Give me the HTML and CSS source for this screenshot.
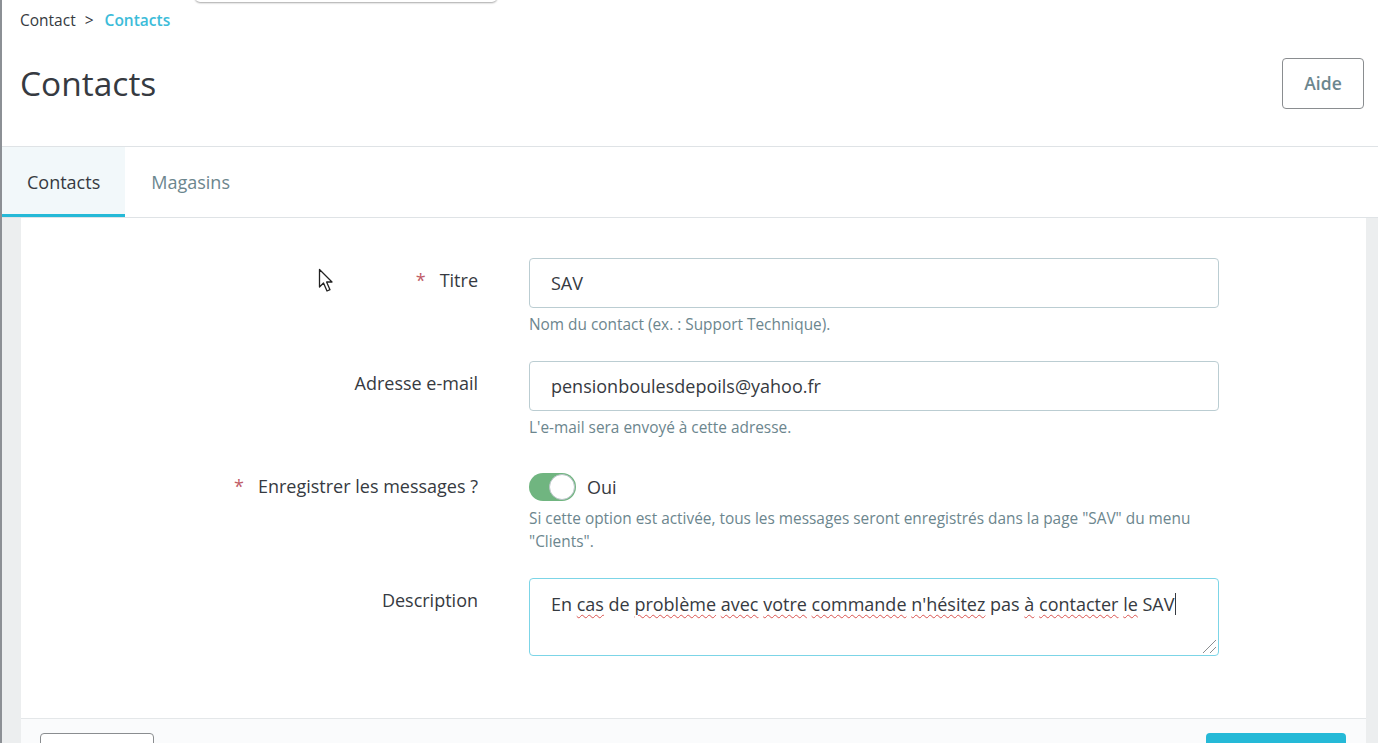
FILE: index.html
```html
<!DOCTYPE html>
<html lang="fr">
<head>
    <meta charset="UTF-8">
    <title>Contacts</title>
    <link rel="stylesheet" href="styles.css">
</head>
<body>
  <div class="page">
    <div class="menu-edge"></div>

    <div class="header">
      <div class="breadcrumb">
        <span>Contact</span>
        <span class="sep">&gt;</span>
        <span class="current">Contacts</span>
      </div>
      <div class="title-row">
        <h1>Contacts</h1>
        <button class="btn-help">Aide</button>
      </div>
    </div>

    <div class="tabs">
      <div class="tab active">Contacts</div>
      <div class="tab">Magasins</div>
    </div>

    <div class="content">
      <div class="card">
        <div class="card-body">
          <div class="form-row">
            <label class="label"><span class="req">*</span>Titre</label>
            <div class="field">
              <div class="input">SAV</div>
              <p class="help">Nom du contact (ex. : Support Technique).</p>
            </div>
          </div>

          <div class="form-row">
            <label class="label">Adresse e-mail</label>
            <div class="field">
              <div class="input">pensionboulesdepoils@yahoo.fr</div>
              <p class="help">L'e-mail sera envoyé à cette adresse.</p>
            </div>
          </div>

          <div class="form-row switch-row">
            <label class="label"><span class="req">*</span>Enregistrer les messages ?</label>
            <div class="field">
              <div class="switch-line">
                <span class="switch"><span class="knob"></span></span>
                <span class="switch-text">Oui</span>
              </div>
              <p class="help">Si cette option est activée, tous les messages seront enregistrés dans la page "SAV" du menu<br>"Clients".</p>
            </div>
          </div>

          <div class="form-row">
            <label class="label">Description</label>
            <div class="field">
              <div class="textarea">En <span class="typo">cas</span> de <span class="typo">problème</span> <span class="typo">avec</span> <span class="typo">votre</span> <span class="typo">commande</span> <span class="typo">n'hésitez</span> pas <span class="typo">à</span> <span class="typo">contacter</span> <span class="typo">le</span> SAV<span class="caret"></span><span class="grip"></span></div>
            </div>
          </div>
        </div>

        <div class="card-footer">
          <button class="btn-outline"></button>
          <button class="btn-primary"></button>
        </div>
      </div>
    </div>

    <svg class="pointer" width="18" height="26" viewBox="0 0 18 26">
      <path d="M1.5 1.5 L1.5 19 L5.5 15 L9 23 L12 21.7 L8.6 14 L14 14 Z" fill="#fff" stroke="#222" stroke-width="1.3" stroke-linejoin="round"/>
    </svg>
  </div>
</body>
</html>
```

FILE: styles.css
```css
* {
    box-sizing: border-box;
}

body {
    margin: 0;
    font-family: "Open Sans", "Noto Sans", sans-serif;
    color: #363a41;
    background: #fff;
}

.page {
    position: relative;
    width: 1378px;
    height: 743px;
    border-left: 2px solid #8c9095;
    overflow: hidden;
}

/* right scroll edge */
.page::after {
    content: "";
    position: absolute;
    left: 1376px;
    top: 40px;
    bottom: 0;
    width: 2px;
    background: #8c9095;
}

.menu-edge {
    position: absolute;
    left: 193px;
    top: -6px;
    width: 302px;
    height: 8px;
    border-radius: 0 0 5px 5px;
    background: #fff;
    box-shadow: 0 1px 2px rgba(0, 0, 0, 0.35);
}

.header {
    height: 147px;
    padding: 0 12px 0 18px;
    border-bottom: 1px solid #dfe3e6;
}

.breadcrumb {
    height: 40px;
    display: flex;
    align-items: center;
    gap: 9px;
    font-size: 15.5px;
    color: #363a41;
}

.breadcrumb .current {
    color: #3cbcd9;
    font-weight: 600;
    margin-left: 2px;
}

.title-row {
    display: flex;
    justify-content: space-between;
    align-items: center;
    height: 86px;
}

h1 {
    margin: 0;
    font-size: 33.5px;
    font-weight: 400;
    color: #363a41;
}

.btn-help {
    width: 82px;
    height: 51px;
    margin-right: 2px;
    border: 1px solid #8a8d90;
    border-radius: 4px;
    background: #fff;
    font-family: inherit;
    font-size: 17.5px;
    font-weight: 600;
    color: #6c868e;
}

.tabs {
    display: flex;
    height: 71px;
    border-bottom: 1px solid #dfe3e6;
}

.tab {
    display: flex;
    align-items: center;
    padding: 0 26px;
    font-size: 18px;
    color: #6c868e;
}

.tab.active {
    color: #363a41;
    background: #f2f8fa;
    border-bottom: 3px solid #25b9d7;
    padding: 3px 25px 0;
}

.content {
    height: 600px;
    padding: 0 12px 0 19px;
    background: #eceeef;
}

.card {
    background: #fff;
    height: 100%;
}

.card-body {
    padding: 40px 0 37px;
}

.form-row {
    display: grid;
    grid-template-columns: 457px 690px;
    column-gap: 51px;
    margin-bottom: 25px;
}

.label {
    text-align: right;
    font-size: 18px;
    padding-top: 10px;
    color: #363a41;
}

.req {
    color: #c05c67;
    margin-right: 14px;
}

.input {
    height: 50px;
    border: 1px solid #bbcdd2;
    border-radius: 4px;
    padding: 0 21px;
    display: flex;
    align-items: center;
    font-size: 18px;
}

.help {
    margin: 5px 0 0;
    font-size: 15.4px;
    line-height: 23px;
    color: #6c868e;
    white-space: nowrap;
}

.switch-row {
    margin-top: 33px;
}

.switch-row .label {
    padding-top: 2px;
}

.switch-line {
    display: flex;
    align-items: center;
    gap: 11px;
    height: 30px;
}

.switch {
    position: relative;
    width: 47px;
    height: 28px;
    border-radius: 14px;
    background: #70b580;
}

.knob {
    position: absolute;
    right: 1px;
    top: 1px;
    width: 26px;
    height: 26px;
    border-radius: 50%;
    background: #fff;
    border: 1px solid #b9c3c7;
}

.switch-text {
    font-size: 18px;
}

.textarea {
    position: relative;
    height: 78px;
    border: 1px solid #7cd5e7;
    border-radius: 4px;
    padding: 12px 21px;
    font-size: 18px;
    line-height: 26px;
}

.typo {
    text-decoration: underline wavy #d9534f;
    text-decoration-thickness: 1px;
    text-underline-offset: 3px;
}

.caret {
    display: inline-block;
    width: 1px;
    height: 22px;
    background: #363a41;
    vertical-align: -4px;
}

.grip {
    position: absolute;
    right: 2px;
    bottom: 2px;
    width: 16px;
    height: 16px;
    background: repeating-linear-gradient(135deg, transparent 0 3px, #8a8d90 3px 4px, transparent 4px 5px);
    clip-path: polygon(100% 0, 100% 100%, 0 100%);
}

.card-footer {
    display: flex;
    justify-content: space-between;
    padding: 14px 20px 0 19px;
    height: 60px;
    background: #fafbfc;
    border-top: 1px solid #e4e7e9;
}

.btn-outline {
    width: 114px;
    height: 40px;
    border: 1px solid #8a8d90;
    border-radius: 4px;
    background: #fff;
}

.btn-primary {
    width: 140px;
    height: 40px;
    border: none;
    border-radius: 4px;
    background: #25b9d7;
}

.pointer {
    position: absolute;
    left: 316px;
    top: 268px;
}
```
